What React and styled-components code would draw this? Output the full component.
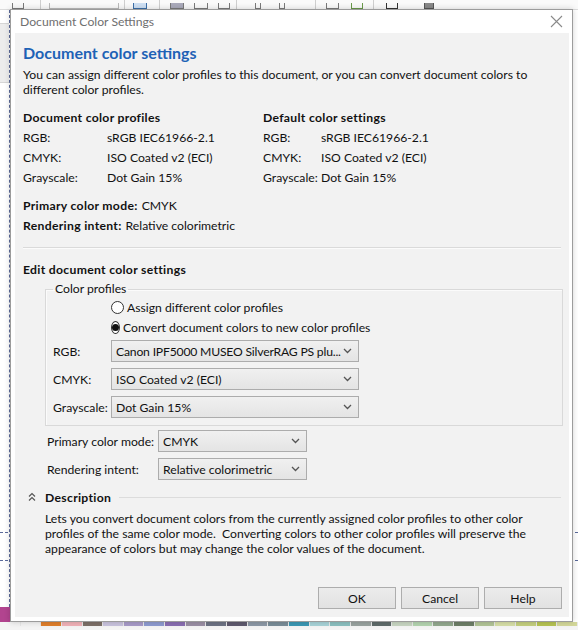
import React from 'react'
import styled, { createGlobalStyle } from 'styled-components'

const GlobalStyle = createGlobalStyle`
  html, body { margin: 0; padding: 0; }
  body { font-family: Lato, "Open Sans", sans-serif; font-size: 12.2px; color: #111; background: #fff; }
  * { box-sizing: border-box; }
`

const Desktop = styled.div`
  position: relative;
  width: 578px;
  height: 630px;
  overflow: hidden;
  display: flex;
  flex-direction: column;
  background: #fff;
`
const Toolbar = styled.div`
  height: 10px;
  flex: none;
  display: flex;
  align-items: flex-end;
  background: #fafafa;
  border-bottom: 1px solid #dcdcdc;
  overflow: hidden;
`
const ToolIcon = styled.div`
  width: ${p => p.w || 12}px;
  height: 6px;
  margin-left: ${p => p.ml || 10}px;
  border: 1px solid ${p => p.c || '#7a7a7a'};
  border-top: none;
  background: ${p => p.bg || 'transparent'};
`
const ToolSep = styled.div`
  width: 1px;
  height: 9px;
  margin-left: ${p => p.ml || 10}px;
  background: #cfcfcf;
`
const Workspace = styled.div`
  flex: 1;
  position: relative;
  display: flex;
`
const SideStrip = styled.div`
  width: 9px;
  display: flex;
  flex-direction: column;
`
const SideDock = styled.div`
  height: 60px;
  margin-top: 13px;
  background: #ececec;
  border-top: 1px solid #d6d6d6;
  border-bottom: 1px solid #d6d6d6;
`
const PageEdge = styled.div`
  flex: 1;
  border-left: 1px dashed #5b6a9a;
`
const Guide = styled.div`
  position: absolute;
  left: 0;
  right: 0;
  top: ${p => p.y}px;
  border-top: 1px dashed #5b6a9a;
`
const Swatch = styled.div`
  position: absolute;
  left: 0;
  bottom: 0;
  width: 10px;
  height: 15px;
  background: #b2448f;
`
const Palette = styled.div`
  height: 8px;
  flex: none;
  display: flex;
  border-bottom: 4px solid #f4f4f4;
`
const PaletteCell = styled.div`
  flex: 1;
  background: ${p => p.c};
  border-right: 1px solid #e8e8e8;
`

const Dialog = styled.div`
  position: absolute;
  left: 10px;
  top: 9px;
  width: 563px;
  height: 613px;
  border: 1px solid #9c9c9c;
  background: #fff;
  display: flex;
  flex-direction: column;
  padding: 0 3px 4px 4px;
  box-shadow: 0 0 6px rgba(0, 0, 0, 0.18);
`
const TitleBar = styled.div`
  height: 23px;
  display: flex;
  align-items: center;
  justify-content: space-between;
  padding: 0 6px 0 5px;
`
const TitleText = styled.span`
  font-size: 12.2px;
  color: #6f6f6f;
`
const Content = styled.div`
  flex: 1;
  background: #f2f2f2;
  padding: 10px 7px 8px 8px;
  display: flex;
  flex-direction: column;
`
const Heading = styled.div`
  font-size: 16px;
  font-weight: 700;
  line-height: 20px;
  color: #1e62b6;
`
const Para = styled.div`
  margin-top: 4px;
  line-height: 15px;
`
const Columns = styled.div`
  margin-top: 11px;
  display: grid;
  grid-template-columns: 240px 1fr;
`
const InfoTable = styled.div`
  display: grid;
  grid-template-columns: ${p => p.labelW}px 1fr;
  line-height: 20px;
`
const InfoTitle = styled.div`
  grid-column: 1 / -1;
  font-weight: 700;
  letter-spacing: 0.3px;
`
const ModeBlock = styled.div`
  margin-top: 8px;
  line-height: 20px;
`
const Bold = styled.span`
  font-weight: 700;
  letter-spacing: 0.3px;
  margin-right: 4px;
`
const Separator = styled.div`
  margin-top: 11px;
  height: 2px;
  border-top: 1px solid #dadada;
  border-bottom: 1px solid #fbfbfb;
  margin-right: 1px;
`
const SectionTitle = styled.div`
  margin-top: 11px;
  line-height: 20px;
  font-weight: 700;
  letter-spacing: 0.3px;
`
const GroupBox = styled.fieldset`
  margin: 1px -1px 0 22px;
  padding: 0 0 7px 7px;
  border: 1px solid #d9d9d9;
  box-shadow: inset 1px 1px 0 #fbfbfb;
`
const Legend = styled.legend`
  padding: 0 2px;
  line-height: 16px;
`
const FormGrid = styled.div`
  display: grid;
  grid-template-columns: ${p => p.labelW}px ${p => p.fieldW}px;
  row-gap: 6px;
  align-items: center;
`
const RadioRow = styled.label`
  grid-column: 2 / span 1;
  display: flex;
  align-items: center;
  height: 20px;
  white-space: nowrap;
  margin-bottom: ${p => (p.last ? -3 : -6)}px;
`
const RadioCircle = styled.span`
  width: 13px;
  height: 13px;
  border-radius: 50%;
  border: 1px solid #333;
  background: #fff;
  margin-right: 3px;
  display: flex;
  align-items: center;
  justify-content: center;
  &::after {
    content: '';
    width: 7px;
    height: 7px;
    border-radius: 50%;
    background: ${p => (p.checked ? '#111' : 'transparent')};
  }
`
const FieldLabel = styled.div`
  white-space: nowrap;
`
const Select = styled.div`
  height: 22px;
  border: 1px solid #acacac;
  background: linear-gradient(#f0f0f0, #e4e4e4);
  display: flex;
  align-items: center;
  gap: 2px;
  padding: 0 6px 0 4px;
  white-space: nowrap;
  svg { flex: none; }
`
const SelectValue = styled.span`
  flex: 1;
  min-width: 0;
  overflow: hidden;
  letter-spacing: ${p => (p.tight ? '-0.2px' : 'normal')};
`
const ModeGrid = styled(FormGrid)`
  margin: 4px 0 0 24px;
`
const DescHeader = styled.div`
  margin-top: 8px;
  height: 18px;
  display: flex;
  align-items: center;
  padding-left: 5px;
`
const DescTitle = styled.span`
  font-weight: 700;
  letter-spacing: 0.3px;
  margin: 0 8px 0 9px;
`
const DescLine = styled.div`
  flex: 1;
  height: 1px;
  background: #dcdcdc;
  margin-right: 1px;
`
const DescText = styled.div`
  margin: 5px 0 0 22px;
  line-height: 15px;
  white-space: nowrap;
`
const Footer = styled.div`
  margin-top: auto;
  display: flex;
  justify-content: flex-end;
  gap: 5px;
`
const Button = styled.button`
  width: 78px;
  height: 22px;
  border: 1px solid #adadad;
  background: linear-gradient(#ececec, #e2e2e2);
  font: inherit;
  color: #111;
  padding: 0;
`

const Chevron = () => (
  <svg width="9" height="6" viewBox="0 0 9 6">
    <path d="M1 1 L4.5 4.5 L8 1" fill="none" stroke="#555" strokeWidth="1.3" />
  </svg>
)

const DoubleUp = () => (
  <svg width="8" height="10" viewBox="0 0 8 10">
    <path d="M1 4.5 L4 1.5 L7 4.5 M1 8.5 L4 5.5 L7 8.5" fill="none" stroke="#555" strokeWidth="1.2" />
  </svg>
)

const CloseIcon = () => (
  <svg width="13" height="13" viewBox="0 0 13 13">
    <path d="M1 1 L12 12 M12 1 L1 12" stroke="#8a8a8a" strokeWidth="1.1" />
  </svg>
)

const paletteColors = [
  '#f4f4f4', '#f4f4f4', '#e07f2c', '#f1b2b8', '#7d7068', '#c9c3de', '#a89bc8', '#8e9bd0',
  '#8a6fb2', '#9b90a5', '#6d7384', '#5f5a6e', '#8d99a6', '#7a8d98', '#3c98b4', '#a8d3d8',
  '#8cc0c0', '#9aa3a0', '#5f6b6a', '#c8d6c2', '#b4d4b0', '#93a88e', '#6d7e67', '#b2c497',
  '#d7dfa7', '#c4cf7e', '#b6c352', '#d4d89a',
]

const toolItems = [
  { t: 'icon', ml: 12, w: 12 }, { t: 'sep', ml: 16 }, { t: 'icon', ml: 8, w: 70, c: '#bbb' },
  { t: 'sep', ml: 5 }, { t: 'icon', ml: 8, w: 14, c: '#3d6fa8', bg: '#cfe0f3' }, { t: 'sep', ml: 12 },
  { t: 'icon', ml: 10, w: 14, bg: '#aab' }, { t: 'icon', ml: 10, w: 14 }, { t: 'icon', ml: 10, w: 12 },
  { t: 'sep', ml: 6 }, { t: 'icon', ml: 18, w: 6 }, { t: 'icon', ml: 18, w: 6 }, { t: 'sep', ml: 30 },
  { t: 'icon', ml: 10, w: 13 }, { t: 'icon', ml: 12, w: 12, c: '#6a9a4a' }, { t: 'sep', ml: 10 },
  { t: 'icon', ml: 12, w: 12, c: '#333' }, { t: 'icon', ml: 26, w: 10, c: '#555', bg: '#888' },
]

const profileRows = [
  ['RGB:', 'sRGB IEC61966-2.1'],
  ['CMYK:', 'ISO Coated v2 (ECI)'],
  ['Grayscale:', 'Dot Gain 15%'],
]

const profileSelects = [
  ['RGB:', 'Canon IPF5000 MUSEO SilverRAG PS plu...', true],
  ['CMYK:', 'ISO Coated v2 (ECI)'],
  ['Grayscale:', 'Dot Gain 15%'],
]

export default function App() {
  return (
    <Desktop>
      <GlobalStyle />
      <Toolbar>
        {toolItems.map((it, i) =>
          it.t === 'sep' ? <ToolSep key={i} ml={it.ml} /> : <ToolIcon key={i} ml={it.ml} w={it.w} c={it.c} bg={it.bg} />
        )}
      </Toolbar>
      <Workspace>
        <SideStrip>
          <SideDock />
        </SideStrip>
        <PageEdge />
        <Guide y={522} />
        <Guide y={550} />
        <Swatch />
      </Workspace>
      <Palette>
        {paletteColors.map((c, i) => <PaletteCell key={i} c={c} />)}
      </Palette>

      <Dialog>
        <TitleBar>
          <TitleText>Document Color Settings</TitleText>
          <CloseIcon />
        </TitleBar>
        <Content>
          <Heading>Document color settings</Heading>
          <Para>
            You can assign different color profiles to this document, or you can convert document colors to
            <br />
            different color profiles.
          </Para>
          <Columns>
            <InfoTable labelW={84}>
              <InfoTitle>Document color profiles</InfoTitle>
              {profileRows.map(([l, v]) => (
                <React.Fragment key={l}><span>{l}</span><span>{v}</span></React.Fragment>
              ))}
            </InfoTable>
            <InfoTable labelW={58}>
              <InfoTitle>Default color settings</InfoTitle>
              {profileRows.map(([l, v]) => (
                <React.Fragment key={l}><span>{l}</span><span>{v}</span></React.Fragment>
              ))}
            </InfoTable>
          </Columns>
          <ModeBlock>
            <div><Bold>Primary color mode:</Bold>CMYK</div>
            <div><Bold>Rendering intent:</Bold>Relative colorimetric</div>
          </ModeBlock>
          <Separator />
          <SectionTitle>Edit document color settings</SectionTitle>
          <GroupBox>
            <Legend>Color profiles</Legend>
            <FormGrid labelW={58} fieldW={248}>
              <RadioRow><RadioCircle />Assign different color profiles</RadioRow>
              <RadioRow last><RadioCircle checked />Convert document colors to new color profiles</RadioRow>
              {profileSelects.map(([l, v, tight]) => (
                <React.Fragment key={l}>
                  <FieldLabel>{l}</FieldLabel>
                  <Select><SelectValue tight={tight}>{v}</SelectValue><Chevron /></Select>
                </React.Fragment>
              ))}
            </FormGrid>
          </GroupBox>
          <ModeGrid labelW={111} fieldW={149}>
            <FieldLabel>Primary color mode:</FieldLabel>
            <Select><SelectValue>CMYK</SelectValue><Chevron /></Select>
            <FieldLabel>Rendering intent:</FieldLabel>
            <Select><SelectValue>Relative colorimetric</SelectValue><Chevron /></Select>
          </ModeGrid>
          <DescHeader>
            <DoubleUp />
            <DescTitle>Description</DescTitle>
            <DescLine />
          </DescHeader>
          <DescText>
            Lets you convert document colors from the currently assigned color profiles to other color
            <br />
            profiles of the same color mode.&nbsp; Converting colors to other color profiles will preserve the
            <br />
            appearance of colors but may change the color values of the document.
          </DescText>
          <Footer>
            <Button>OK</Button>
            <Button>Cancel</Button>
            <Button>Help</Button>
          </Footer>
        </Content>
      </Dialog>
    </Desktop>
  )
}
